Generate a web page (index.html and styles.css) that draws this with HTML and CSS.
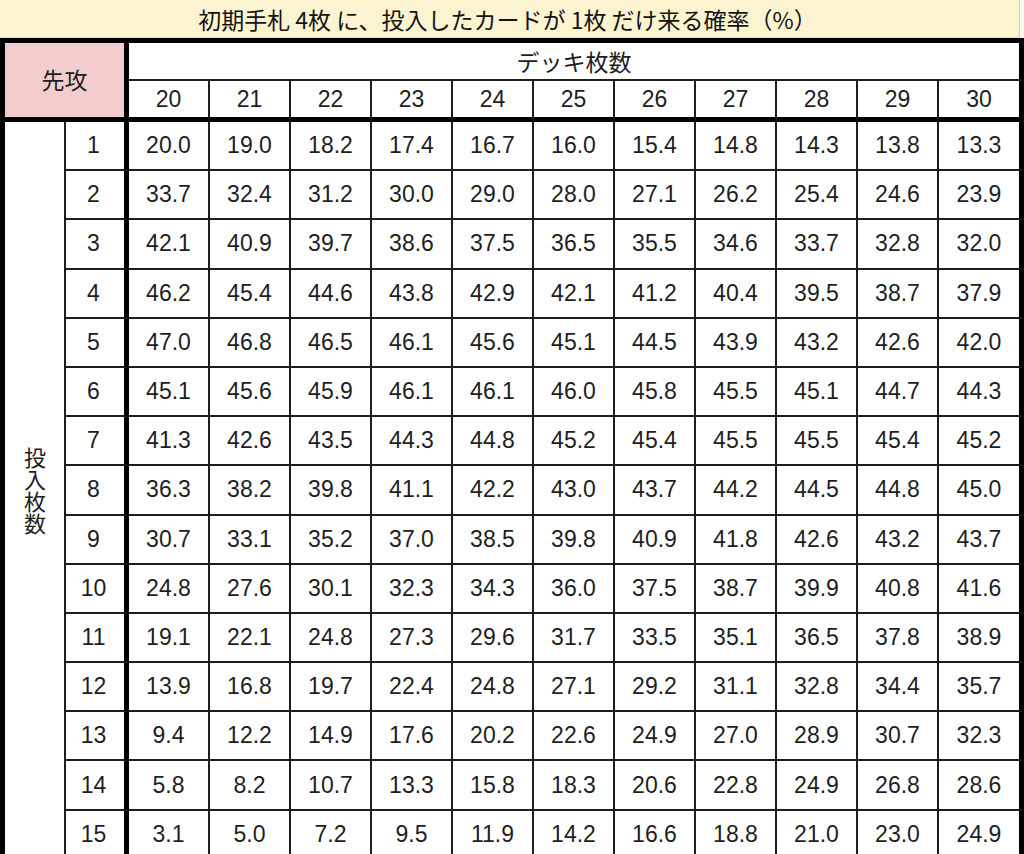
FILE: index.html
```html
<!DOCTYPE html>
<html lang="ja">
<head>
<meta charset="utf-8">
<title>確率表</title>
<link rel="stylesheet" href="styles.css">
</head>
<body>
<div class="page">
  <div class="title">初期手札 4枚 に、投入したカードが 1枚 だけ来る確率（%）</div>
  <div class="grid" id="grid">
    <div class="corner">先攻</div>
    <div class="deck">デッキ枚数</div>
    <div class="hnum">20</div><div class="hnum">21</div><div class="hnum">22</div><div class="hnum">23</div><div class="hnum">24</div><div class="hnum">25</div><div class="hnum">26</div><div class="hnum">27</div><div class="hnum">28</div><div class="hnum">29</div><div class="hnum last">30</div>
    <div class="side">投入枚数</div>
    <div class="rn">1</div><div class="c">20.0</div><div class="c">19.0</div><div class="c">18.2</div><div class="c">17.4</div><div class="c">16.7</div><div class="c">16.0</div><div class="c">15.4</div><div class="c">14.8</div><div class="c">14.3</div><div class="c">13.8</div><div class="c last">13.3</div>
    <div class="rn">2</div><div class="c">33.7</div><div class="c">32.4</div><div class="c">31.2</div><div class="c">30.0</div><div class="c">29.0</div><div class="c">28.0</div><div class="c">27.1</div><div class="c">26.2</div><div class="c">25.4</div><div class="c">24.6</div><div class="c last">23.9</div>
    <div class="rn">3</div><div class="c">42.1</div><div class="c">40.9</div><div class="c">39.7</div><div class="c">38.6</div><div class="c">37.5</div><div class="c">36.5</div><div class="c">35.5</div><div class="c">34.6</div><div class="c">33.7</div><div class="c">32.8</div><div class="c last">32.0</div>
    <div class="rn">4</div><div class="c">46.2</div><div class="c">45.4</div><div class="c">44.6</div><div class="c">43.8</div><div class="c">42.9</div><div class="c">42.1</div><div class="c">41.2</div><div class="c">40.4</div><div class="c">39.5</div><div class="c">38.7</div><div class="c last">37.9</div>
    <div class="rn">5</div><div class="c">47.0</div><div class="c">46.8</div><div class="c">46.5</div><div class="c">46.1</div><div class="c">45.6</div><div class="c">45.1</div><div class="c">44.5</div><div class="c">43.9</div><div class="c">43.2</div><div class="c">42.6</div><div class="c last">42.0</div>
    <div class="rn">6</div><div class="c">45.1</div><div class="c">45.6</div><div class="c">45.9</div><div class="c">46.1</div><div class="c">46.1</div><div class="c">46.0</div><div class="c">45.8</div><div class="c">45.5</div><div class="c">45.1</div><div class="c">44.7</div><div class="c last">44.3</div>
    <div class="rn">7</div><div class="c">41.3</div><div class="c">42.6</div><div class="c">43.5</div><div class="c">44.3</div><div class="c">44.8</div><div class="c">45.2</div><div class="c">45.4</div><div class="c">45.5</div><div class="c">45.5</div><div class="c">45.4</div><div class="c last">45.2</div>
    <div class="rn">8</div><div class="c">36.3</div><div class="c">38.2</div><div class="c">39.8</div><div class="c">41.1</div><div class="c">42.2</div><div class="c">43.0</div><div class="c">43.7</div><div class="c">44.2</div><div class="c">44.5</div><div class="c">44.8</div><div class="c last">45.0</div>
    <div class="rn">9</div><div class="c">30.7</div><div class="c">33.1</div><div class="c">35.2</div><div class="c">37.0</div><div class="c">38.5</div><div class="c">39.8</div><div class="c">40.9</div><div class="c">41.8</div><div class="c">42.6</div><div class="c">43.2</div><div class="c last">43.7</div>
    <div class="rn">10</div><div class="c">24.8</div><div class="c">27.6</div><div class="c">30.1</div><div class="c">32.3</div><div class="c">34.3</div><div class="c">36.0</div><div class="c">37.5</div><div class="c">38.7</div><div class="c">39.9</div><div class="c">40.8</div><div class="c last">41.6</div>
    <div class="rn">11</div><div class="c">19.1</div><div class="c">22.1</div><div class="c">24.8</div><div class="c">27.3</div><div class="c">29.6</div><div class="c">31.7</div><div class="c">33.5</div><div class="c">35.1</div><div class="c">36.5</div><div class="c">37.8</div><div class="c last">38.9</div>
    <div class="rn">12</div><div class="c">13.9</div><div class="c">16.8</div><div class="c">19.7</div><div class="c">22.4</div><div class="c">24.8</div><div class="c">27.1</div><div class="c">29.2</div><div class="c">31.1</div><div class="c">32.8</div><div class="c">34.4</div><div class="c last">35.7</div>
    <div class="rn">13</div><div class="c">9.4</div><div class="c">12.2</div><div class="c">14.9</div><div class="c">17.6</div><div class="c">20.2</div><div class="c">22.6</div><div class="c">24.9</div><div class="c">27.0</div><div class="c">28.9</div><div class="c">30.7</div><div class="c last">32.3</div>
    <div class="rn">14</div><div class="c">5.8</div><div class="c">8.2</div><div class="c">10.7</div><div class="c">13.3</div><div class="c">15.8</div><div class="c">18.3</div><div class="c">20.6</div><div class="c">22.8</div><div class="c">24.9</div><div class="c">26.8</div><div class="c last">28.6</div>
    <div class="rn">15</div><div class="c">3.1</div><div class="c">5.0</div><div class="c">7.2</div><div class="c">9.5</div><div class="c">11.9</div><div class="c">14.2</div><div class="c">16.6</div><div class="c">18.8</div><div class="c">21.0</div><div class="c">23.0</div><div class="c last">24.9</div>
  </div>
</div>
</body>
</html>
```

FILE: styles.css
```css
html, body {
  margin: 0;
  padding: 0;
  background: #ffffff;
}
body {
  font-family: "Liberation Sans", Arial, "Noto Sans CJK JP", sans-serif;
  color: #1e1e1e;
}
.page {
  width: 1024px;
  height: 854px;
  overflow: hidden;
  background: #fbf8ee;
}
.title {
  box-sizing: border-box;
  width: 1020px;
  height: 38px;
  background: #fcf3d1;
  border-right: 1px solid #d4cdb8;
  border-bottom: 1px solid #e6dfc6;
  display: flex;
  align-items: center;
  justify-content: center;
  font-family: "Noto Sans CJK JP", sans-serif;
  font-size: 23px;
  font-weight: 400;
  color: #141414;
  padding-right: 4px;
}
.grid {
  display: grid;
  box-sizing: border-box;
  width: 1024px;
  border-top: 5px solid #000;
  border-left: 5px solid #000;
  grid-template-columns: 61px 63px repeat(10, 81px) 85px;
  grid-template-rows: 38px 41px repeat(15, 49.2px);
  background: #fff;
}
.grid > div {
  box-sizing: border-box;
  display: flex;
  align-items: center;
  justify-content: center;
}
.corner {
  grid-column: 1 / 3;
  grid-row: 1 / 3;
  background: #f3cdcd;
  border-right: 5px solid #000;
  border-bottom: 5px solid #000;
  font-family: "Noto Sans CJK JP", sans-serif;
  font-size: 23px;
  padding-bottom: 2px;
}
.deck {
  grid-column: 3 / -1;
  grid-row: 1;
  border-right: 5px solid #000;
  border-bottom: 2px solid #1e1e1e;
  font-family: "Noto Sans CJK JP", sans-serif;
  font-size: 23px;
}
.hnum {
  border-right: 2px solid #1e1e1e;
  border-bottom: 5px solid #000;
  font-size: 23px;
}
.side {
  grid-column: 1;
  grid-row: 3 / 18;
  border-right: 2px solid #1e1e1e;
  font-family: "Noto Sans CJK JP", sans-serif;
  font-size: 22px;
  line-height: 23px;
  writing-mode: vertical-rl;
  text-orientation: upright;
}
.grid > .side {
  align-self: start;
  height: 738px;
}
.rn {
  grid-column: 2;
  border-right: 5px solid #000;
  border-bottom: 2px solid #1e1e1e;
  font-size: 23px;
  padding-right: 3px;
}
.c {
  border-right: 2px solid #1e1e1e;
  border-bottom: 2px solid #1e1e1e;
  font-size: 23px;
}
.grid > .last {
  border-right: 5px solid #000;
}
```
